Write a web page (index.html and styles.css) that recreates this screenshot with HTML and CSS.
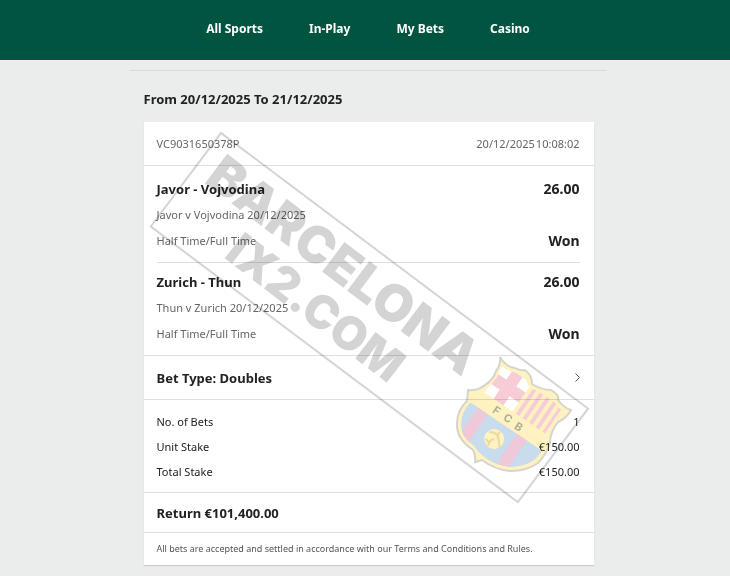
FILE: index.html
```html
<!DOCTYPE html>
<html lang="en">
<head>
<meta charset="utf-8">
<meta name="viewport" content="width=device-width, initial-scale=1">
<title>My Bets</title>
<link rel="stylesheet" href="styles.css">
</head>
<body>
<header class="topbar">
  <nav class="nav">
    <a href="#">All Sports</a>
    <a href="#">In-Play</a>
    <a href="#">My Bets</a>
    <a href="#">Casino</a>
  </nav>
</header>
<main class="content">
 <div class="page">
  <h1 class="range">From 20/12/2025 To 21/12/2025</h1>
  <article class="slip">
    <div class="row slip-head">
      <span>VC9031650378P</span>
      <span class="stamp"><span>20/12/2025</span><span>10:08:02</span></span>
    </div>
    <div class="selections">
      <section class="selection">
        <div class="row strong"><h2>Javor - Vojvodina</h2><span>26.00</span></div>
        <p class="fixture">Javor v Vojvodina 20/12/2025</p>
        <div class="row market"><span>Half Time/Full Time</span><strong>Won</strong></div>
      </section>
      <section class="selection">
        <div class="row strong"><h2>Zurich - Thun</h2><span>26.00</span></div>
        <p class="fixture">Thun v Zurich 20/12/2025</p>
        <div class="row market"><span>Half Time/Full Time</span><strong>Won</strong></div>
      </section>
    </div>
    <button class="row bet-type" type="button">
      <span>Bet Type: Doubles</span>
      <svg width="5" height="9" viewBox="0 0 5 9" aria-hidden="true"><path d="M.5.5l4 4-4 4" fill="none" stroke="#555" stroke-width="1"/></svg>
    </button>
    <dl class="stakes">
      <div class="row"><dt>No. of Bets</dt><dd>1</dd></div>
      <div class="row"><dt>Unit Stake</dt><dd>€150.00</dd></div>
      <div class="row"><dt>Total Stake</dt><dd>€150.00</dd></div>
    </dl>
    <p class="return">Return €101,400.00</p>
    <p class="terms">All bets are accepted and settled in accordance with our Terms and Conditions and Rules.</p>
    <svg class="watermark" width="450" height="400" viewBox="144 122 450 400" aria-hidden="true">
      <defs>
        <path id="outline" d="M500 357Q506 367 515 368Q520 371 525 370Q532 375 532 384Q542 390 551 390Q560 395 558 400Q564 408 571 410Q567 418 558 422Q550 432 550 443Q546 455 538 463Q527 471 511 471Q495 470 482 460L475 462Q476 455 473 450Q458 440 457 427Q456 411 467 401L468 390Q478 391 485 385Q494 379 496 371Q501 365 500 357Z"/>
        <clipPath id="shield"><use href="#outline"/></clipPath>
        <clipPath id="field"><path d="M500 364Q506 372 523 374Q527 380 529 387Q543 395 552 394Q554 405 563 411Q552 417 546 440Q540 466 511 467Q487 465 474 446Q461 437 461 425Q461 411 471 402L472 394Q485 393 493 382Q501 374 500 364Z"/></clipPath>
      </defs>
      <g transform="translate(221 133) rotate(36.9)">
        <rect width="459" height="117" fill="none" stroke="#000" stroke-opacity=".17" stroke-width="2"/>
      </g>
      <g class="mark-text">
        <text transform="translate(203 182) rotate(37)">BARCELONA</text>
        <text class="mark-small" transform="translate(223 257) rotate(37.5)">IX2.COM</text>
      </g>
      <g class="crest">
        <g clip-path="url(#shield)">
          <path fill="#fdf2c0" d="M440 340h150v150h-150z"/>
        </g>
        <g clip-path="url(#field)">
          <g transform="translate(508 388) rotate(34)">
            <path fill="#fff" d="M-17-17H17V17H-17z"/>
            <path fill="#f8ccd6" d="M-6-17H6V17H-6zM-17-6H17V6H-17z"/>
            <path fill="#f8ccd6" d="M21-14h4v31h-4zM29-14h4v31h-4zM37-14h4v31h-4zM45-14h4v31h-4zM53-14h3v31h-3z"/>
            <path fill="#c9dcee" d="M-40 33H80V90H-40z"/>
            <path fill="#edc9da" d="M-14 33H-2V90H-14zM33 33H45V90H33z"/>
            <circle cx="17" cy="50" r="10" fill="#fdf2c0"/>
            <path d="M9 47q7-5 12 1t6 6M17 50q-4 4-1 9M18 41q-1 5 3 7M10 54q3 3 6 0" fill="none" stroke="#ecd9a2" stroke-width="2"/>
          </g>
        </g>
        <g class="crest-text" transform="translate(508 388) rotate(34)">
          <text x="0" y="29">F</text><text x="13" y="29">C</text><text x="27" y="30">B</text>
        </g>
        <use href="#outline" fill="none" stroke="#d6d5cb" stroke-width="2"/>
      </g>
    </svg>
  </article>
 </div>
</main>
</body>
</html>
```
FILE: styles.css
```css
* { box-sizing: border-box; margin: 0; padding: 0; }
body { background: #ebeded; color: #222; font-family: "Noto Sans", "Open Sans", sans-serif; font-size: 11px; }
.topbar { background: #005440; }
.nav { display: flex; justify-content: center; gap: 46px; padding: 0 0 2px 6px; }
.nav a { color: #fff; font-size: 12px; font-weight: 700; line-height: 58px; text-decoration: none; }
.content { padding: 10px 0 0 6px; }
.page { max-width: 477px; margin: 0 auto; border-top: 1px solid #d8dada; padding: 0 13px 10px 14px; }
.range { font-size: 13px; font-weight: 700; line-height: 20px; padding: 18px 0 13px; }
.slip { position: relative; background: #fff; box-shadow: 0 1px 1px #ccc; }
.row { display: flex; justify-content: space-between; align-items: center; }
.slip-head { padding: 0 14px 0 13px; height: 44px; border-bottom: 1px solid #dfdfdf; color: #666; }
.stamp { display: flex; gap: 1px; }
.selections { padding: 0 14px 0 13px; }
.selection { padding: 13px 0 11px; }
.selection + .selection { border-top: 1px solid #dfdfdf; padding-top: 9px; }
.strong, .market strong { font-size: 14px; font-weight: 700; line-height: 20px; }
.strong h2 { font-size: 13px; font-weight: 700; line-height: 20px; }
.fixture, .market { line-height: 20px; color: #666; }
.fixture { padding: 6px 0; }
.market strong { color: #222; }
.bet-type { width: 100%; height: 45px; padding: 0 14px 0 13px; border: 0; border-top: 1px solid #dfdfdf; border-bottom: 1px solid #dfdfdf; background: none; color: #222; font: 700 13px "Noto Sans", "Open Sans", sans-serif; }
.stakes { padding: 9px 14px 8px 13px; border-bottom: 1px solid #dfdfdf; }
.stakes .row { height: 25px; }
.return { padding: 1px 13px 0; font-size: 13px; font-weight: 700; line-height: 38px; border-bottom: 1px solid #dfdfdf; }
.terms { padding: 8px 13px; font-size: 9px; line-height: 16px; color: #555; }
.watermark { position: absolute; left: 0; top: 0; pointer-events: none; overflow: visible; mix-blend-mode: multiply; }
.mark-text { font-family: Inter, sans-serif; font-size: 51px; font-weight: 900; fill: #000; fill-opacity: .17; }
.mark-small { font-size: 46px; }
.crest-text { font-family: Inter, sans-serif; font-size: 11px; font-weight: 700; fill: #b3ac98; }
```
